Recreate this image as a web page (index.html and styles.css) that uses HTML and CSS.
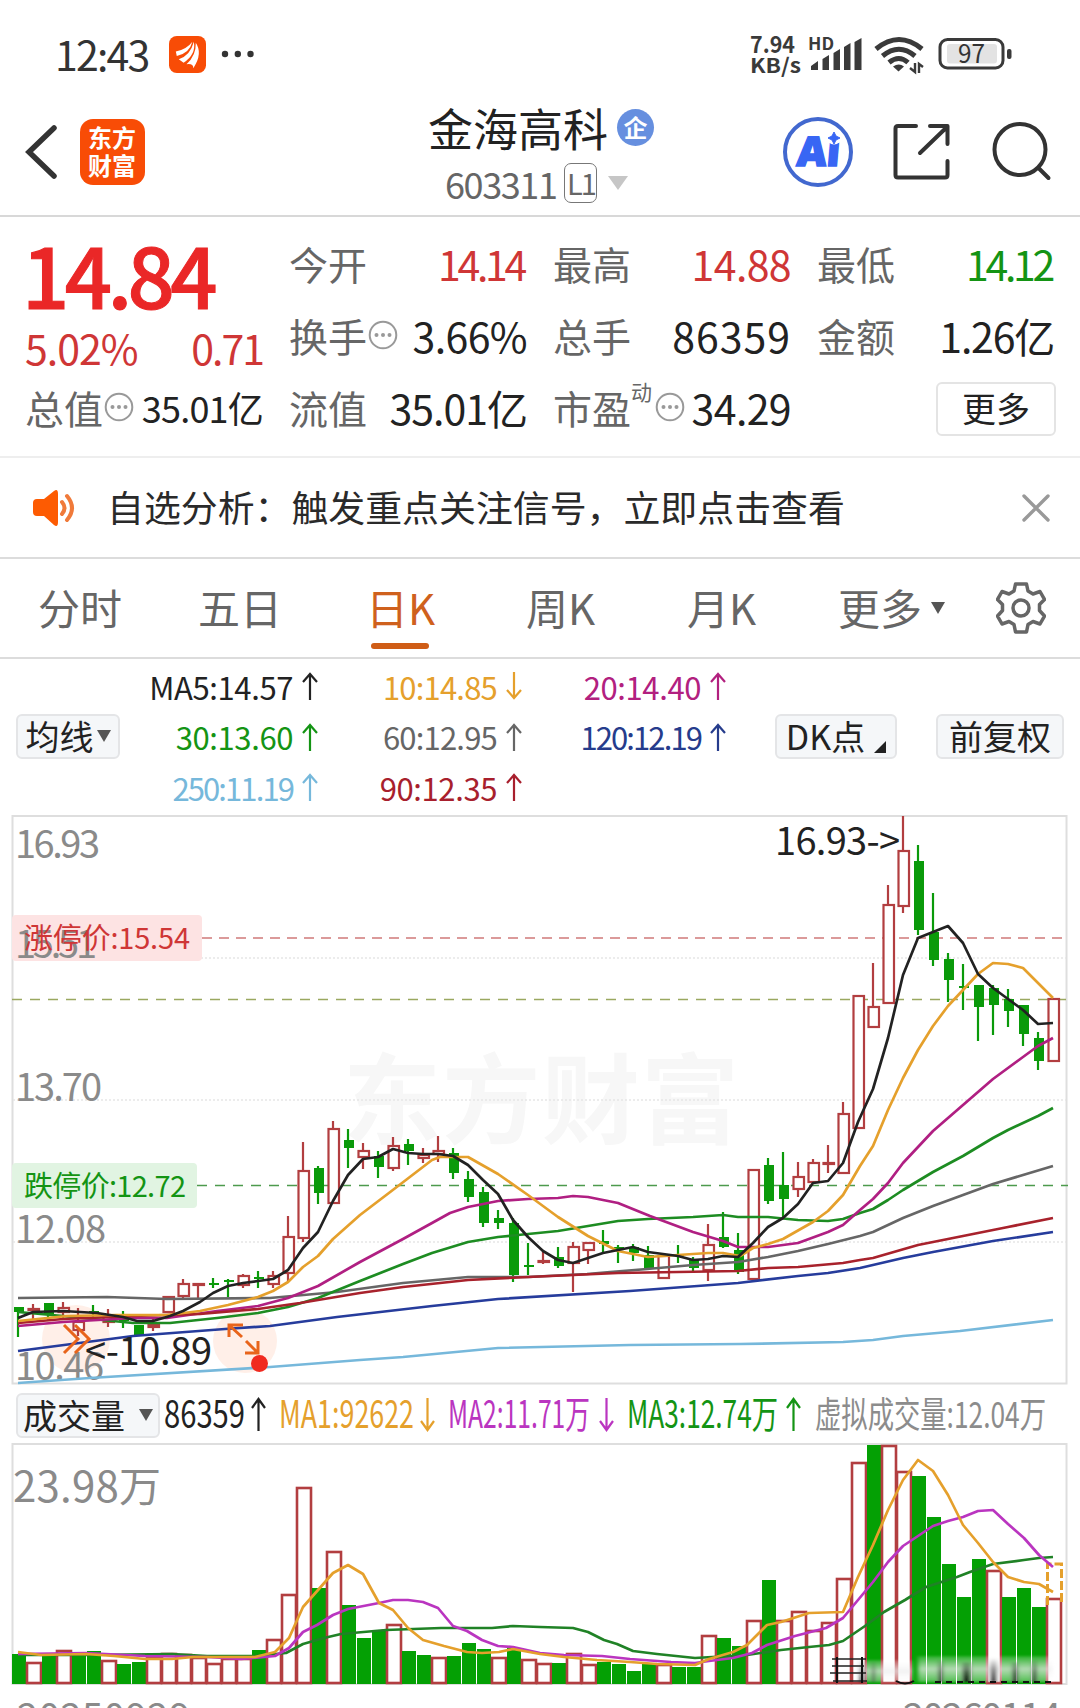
FILE: index.html
```html
<!DOCTYPE html>
<html lang="zh-CN">
<head>
    <meta charset="UTF-8">
    <meta name="viewport" content="width=device-width, initial-scale=1.0">
    <title>金海高科 603311</title>
    <link rel="stylesheet" href="styles.css">
</head>
<body>
    <svg class="defs" width="0" height="0">
        <symbol id="up" viewBox="0 0 16 28"><path d="M8 28V2M1 10L8 2L15 10" fill="none" stroke="currentColor" stroke-width="2.2"/></symbol>
        <symbol id="down" viewBox="0 0 16 28"><path d="M8 0V26M1 18L8 26L15 18" fill="none" stroke="currentColor" stroke-width="2.2"/></symbol>
        <symbol id="info" viewBox="0 0 30 30">
            <circle cx="15" cy="15" r="13.3" fill="none" stroke="#999" stroke-width="2"/>
            <circle cx="8.5" cy="15" r="2" fill="#999"/><circle cx="15" cy="15" r="2" fill="#999"/><circle cx="21.5" cy="15" r="2" fill="#999"/>
        </symbol>
    </svg>

    <div class="status">
        <span class="clock">12:43</span>
        <svg class="status-app" viewBox="0 0 38 38">
            <rect width="38" height="38" rx="8" fill="#f84c06"/>
            <path d="M7 16Q18 14 24 6Q21 18 8 20.500ZM10 24Q22 20 25.500 6Q28 19 15 27.500ZM18 29Q28 20 27.500 7Q35 18 25 33Q25 28 18 29Z" fill="#fff"/>
        </svg>
        <svg class="dots" viewBox="0 0 34 8"><g fill="#333"><circle cx="4" cy="4" r="3.2"/><circle cx="16.8" cy="4" r="3.2"/><circle cx="29.5" cy="4" r="3.2"/></g></svg>
        <svg class="status-right" viewBox="745 30 275 50">
            <g fill="#3a3a3a" font-weight="700">
                <text x="750" y="54" font-size="23" textLength="45" lengthAdjust="spacingAndGlyphs">7.94</text>
                <text x="750" y="74" font-size="20.500" textLength="51" lengthAdjust="spacingAndGlyphs">KB/s</text>
                <text x="808" y="51" font-size="17.500" textLength="26" lengthAdjust="spacingAndGlyphs">HD</text>
                <path d="M811 71v-4l7-5v9zM822.500 71v-11l6.500-4v15zM833.500 71v-17l6.500-4v21zM844 71v-23l6.500-4v27zM854.500 71v-28l7-4v32z"/>
            </g>
            <g fill="none" stroke="#3a3a3a" stroke-width="5">
                <path d="M876 50Q899 31 922 50"/>
                <path d="M882.500 57Q899 43.500 915 57"/>
                <path d="M889 63.500Q899 55.500 908 63.500"/>
            </g>
            <path d="M893 67.500q6-4 11 0l-5.500 5z" fill="#3a3a3a"/>
            <path d="M915 64v9l-5-4M919 74v-9l4 3" fill="none" stroke="#3a3a3a" stroke-width="2.400"/>
            <rect x="940" y="40.500" width="63" height="28.500" rx="7.500" fill="none" stroke="#3a3a3a" stroke-width="3"/>
            <rect x="947" y="45" width="50" height="19.500" rx="3" fill="#e3e3e3"/>
            <rect x="1007" y="50" width="4.500" height="10" rx="2" fill="#3a3a3a"/>
            <text x="958" y="64" font-size="25" textLength="27" lengthAdjust="spacingAndGlyphs" fill="#333">97</text>
        </svg>
    </div>

    <div class="header">
        <svg class="back" viewBox="0 0 34 56"><path d="M30 4L5 28L30 52" fill="none" stroke="#333" stroke-width="5.500" stroke-linecap="round"/></svg>
        <div class="logo">东方<br>财富</div>
        <div class="title">
            <div class="name">金海高科<span class="badge">企</span></div>
            <div class="code">603311<span class="level">L1</span><span class="caret"></span></div>
        </div>
        <svg class="head-icons" viewBox="780 110 280 82">
            <circle cx="818" cy="151" r="33" fill="#fff" stroke="#4268cf" stroke-width="4"/>
            <text class="ai" transform="translate(796 165) skewX(-5)" textLength="43" lengthAdjust="spacingAndGlyphs">Ai</text>
            <circle cx="834" cy="136" r="7.500" fill="#fff"/>
            <path d="M834 131l2 4l4 2l-4 2l-2 4l-2-4l-4-2l4-2z" fill="#3866f4" stroke="#3866f4" stroke-linejoin="round"/>
            <g fill="none" stroke="#333" stroke-width="4" stroke-linecap="round" stroke-linejoin="round">
                <path d="M916 125H898q-2.500 0-2.500 2.500V174q0 2.500 2.500 2.500H945q2.500 0 2.500-2.500V160M930 125H947.500V143M947 126L920 152"/>
                <circle cx="1020" cy="148.500" r="25.500"/>
                <path d="M1038.500 167L1048.500 177"/>
            </g>
        </svg>
    </div>

    <div class="quote">
        <div class="price">
            <div class="last">14.84</div>
            <div class="change"><span>5.02%</span><span class="ones">0.71</span></div>
        </div>
        <div class="cell"><label>今开</label><b class="red ones2">14.14</b></div>
        <div class="cell"><label>最高</label><b class="red">14.88</b></div>
        <div class="cell"><label>最低</label><b class="green ones2">14.12</b></div>
        <div class="cell"><label>换手</label><svg class="info"><use href="#info"/></svg><b>3.66%</b></div>
        <div class="cell"><label>总手</label><b class="wide">86359</b></div>
        <div class="cell"><label>金额</label><b class="yi2">1.26亿</b></div>
        <div class="cell"><label>总值</label><svg class="info"><use href="#info"/></svg><b class="small">35.01亿</b></div>
        <div class="cell"><label>流值</label><b class="yi">35.01亿</b></div>
        <div class="cell"><label>市盈<sup>动</sup></label><svg class="info"><use href="#info"/></svg><b>34.29</b></div>
        <div class="cell"><span class="more">更多</span></div>
    </div>

    <div class="notice">
        <svg class="horn" viewBox="0 0 44 38">
            <path d="M1 14q0-4 4-4h7L22 2q4-3 4 3v28q0 6-4 3L12 27H5q-4 0-4-4z" fill="#fd5b02"/>
            <path d="M30 13q5 6 0 12M35 7q10 12 0 24" fill="none" stroke="#f07a3a" stroke-width="4" stroke-linecap="round"/>
        </svg>
        <span class="notice-text">自选分析：触发重点关注信号，立即点击查看</span>
        <svg class="close" viewBox="0 0 28 28"><path d="M2 2L26 26M26 2L2 26" stroke="#999" stroke-width="3.400" stroke-linecap="round"/></svg>
    </div>

    <div class="tabs">
        <span>分时</span>
        <span>五日</span>
        <span class="active">日K</span>
        <span>周K</span>
        <span>月K</span>
        <span>更多<i class="tri"></i></span>
        <svg class="gear" viewBox="0 0 50 52">
            <path d="M19.500 2h11l1.500 7l5 3l7-2.500l4.500 8l-5 5v6l5 5.500l-4.500 8l-7-2.500l-5 3l-1.500 7.500h-11l-1.500-7.500l-5-3l-7 2.500l-4.500-8l5-5.500v-6l-5-5l4.500-8l7 2.500l5-3z" fill="none" stroke="#666" stroke-width="3.500" stroke-linejoin="round"/>
            <circle cx="25" cy="26" r="8" fill="none" stroke="#666" stroke-width="3.500"/>
        </svg>
    </div>

    <div class="ma">
        <span class="btn ma-btn">均线<i class="tri"></i></span>
        <div class="ma-values">
            <span class="c-black loose">MA5:14.57<svg><use href="#up"/></svg></span>
            <span class="c-orange">10:14.85<svg><use href="#down"/></svg></span>
            <span class="c-pink loose">20:14.40<svg><use href="#up"/></svg></span>
            <span class="c-green loose">30:13.60<svg><use href="#up"/></svg></span>
            <span class="c-gray">60:12.95<svg><use href="#up"/></svg></span>
            <span class="c-blue tight">120:12.19<svg><use href="#up"/></svg></span>
            <span class="c-sky tight">250:11.19<svg><use href="#up"/></svg></span>
            <span class="c-red loose">90:12.35<svg><use href="#up"/></svg></span>
        </div>
        <span class="btn dk-btn">DK点<i class="corner"></i></span>
        <span class="btn">前复权</span>
    </div>

    <svg class="kchart" viewBox="0 810 1080 575">
        <text x="343" y="1136" font-size="98" font-weight="700" fill="#f7f7f7" textLength="396">东方财富</text>
        <rect x="12.500" y="816" width="1054" height="567.500" fill="none" stroke="#dedede" stroke-width="2"/>
        <g stroke="#e6e6e6" stroke-width="1.500" stroke-dasharray="2 2">
            <path d="M13 958H1066M13 1100H1066M13 1242H1066"/>
        </g>
        <rect x="12" y="915" width="190" height="46" rx="4" fill="#fde3e3"/>
        <rect x="12" y="1163" width="185" height="45" rx="4" fill="#e1f4e2"/>
        <g fill="none" stroke-width="1.500">
            <path d="M202 938H1068" stroke="#cf7a7a" stroke-dasharray="10 7"/>
            <path d="M12 999.500H1068" stroke="#9aa860" stroke-dasharray="10 8"/>
            <path d="M197 1185.500H1068" stroke="#4d9a4d" stroke-dasharray="10 8"/>
        </g>
        <circle cx="76" cy="1339" r="34" fill="#ffdccb" opacity=".45"/>
        <circle cx="245" cy="1341" r="32" fill="#ffdccb" opacity=".45"/>
        <g class="axis">
            <text x="15" y="858" textLength="85">16.93</text>
            <text x="15" y="958" textLength="82">15.51</text>
            <text x="15" y="1101" textLength="87">13.70</text>
            <text x="15" y="1243" textLength="91">12.08</text>
            <text x="15" y="1380" textLength="89">10.46</text>
        </g>
        <text x="24" y="949" font-size="29" textLength="166" fill="#cf3636">涨停价:15.54</text>
        <text x="24" y="1197" font-size="29" textLength="162" fill="#149414">跌停价:12.72</text>
        <g id="candles"></g>
        <g id="lines"></g>
        <g fill="none" stroke="#e8641b" stroke-width="3">
            <path d="M64 1325L78 1339L64 1353M75 1325L89 1339L75 1353"/>
            <path d="M229 1337V1325H243M230 1326L242 1337M245 1353H258V1341M246 1341L258 1353"/>
        </g>
        <circle cx="259.500" cy="1363.500" r="8.500" fill="#f02a20"/>
        <g fill="#222" font-size="38">
            <text x="775" y="855" textLength="125">16.93-&gt;</text>
            <text x="85" y="1365" textLength="127">&lt;-10.89</text>
        </g>
    </svg>

    <div class="volume-row">
        <span class="btn vol-btn">成交量<i class="tri"></i></span>
        <svg class="vol-values" viewBox="160 1390 900 50">
            <g font-size="38">
                <text x="164" y="1428" textLength="81" lengthAdjust="spacingAndGlyphs" fill="#222">86359</text>
                <text x="279" y="1428" textLength="135" lengthAdjust="spacingAndGlyphs" fill="#e5a02c">MA1:92622</text>
                <text x="448" y="1428" textLength="142" lengthAdjust="spacingAndGlyphs" fill="#ba35c0">MA2:11.71万</text>
                <text x="627" y="1428" textLength="151" lengthAdjust="spacingAndGlyphs" fill="#149414">MA3:12.74万</text>
                <text x="815" y="1428" font-size="36" textLength="231" lengthAdjust="spacingAndGlyphs" fill="#8c8c8c">虚拟成交量:12.04万</text>
            </g>
            <g fill="none" stroke-width="2.200">
                <path d="M258.500 1431V1400M252 1408L258.500 1399L265 1408" stroke="#222"/>
                <path d="M427.500 1398V1429M421 1421L427.500 1430L434 1421" stroke="#e5a02c"/>
                <path d="M606.500 1398V1429M600 1421L606.500 1430L613 1421" stroke="#ba35c0"/>
                <path d="M793.500 1431V1400M787 1408L793.500 1399L800 1408" stroke="#149414"/>
            </g>
        </svg>
    </div>

    <svg class="vchart" viewBox="0 1440 1080 268">
        <defs>
            <filter id="soft" x="-10%" y="-10%" width="120%" height="120%"><feGaussianBlur stdDeviation="2 1"/></filter>
            <linearGradient id="fade" x1="0" y1="0" x2="0" y2="1">
                <stop offset="0" stop-color="#fff" stop-opacity=".15"/>
                <stop offset=".5" stop-color="#eee" stop-opacity=".75"/>
                <stop offset="1" stop-color="#fff" stop-opacity=".3"/>
            </linearGradient>
            <linearGradient id="ink" x1="0" y1="0" x2="0" y2="1">
                <stop offset="0" stop-color="#000" stop-opacity="0"/>
                <stop offset="1" stop-color="#000" stop-opacity=".9"/>
            </linearGradient>
        </defs>
        <rect x="12.500" y="1444" width="1054" height="240" fill="none" stroke="#dedede" stroke-width="2"/>
        <text x="13" y="1502" font-size="42" textLength="148" fill="#8a8a8a">23.98万</text>
        <g id="bars"></g>
        <path d="M1047.500 1605V1564H1061.500V1605" fill="none" stroke="#e5a02c" stroke-width="3" stroke-dasharray="9 3"/>
        <g id="vlines"></g>
        <g filter="url(#soft)">
            <rect x="862" y="1660" width="50" height="22" fill="url(#fade)"/>
            <rect x="918" y="1656" width="134" height="26" fill="url(#fade)"/>
            <path d="M860 1658h5v24h-5zM872 1662h3v20h-3zM938 1660h5v22h-5zM962 1662h9v20h-9zM990 1658h7v24h-7zM1012 1662h6v20h-6zM1032 1660h5v22h-5z" fill="url(#ink)"/>
        </g>
        <path d="M832 1659h34M832 1666h32M830 1673h36M833 1681h34" stroke="#222" stroke-width="1.500"/>
        <path d="M837 1657v26M862 1657v26M896 1681q9 5 18 0" fill="none" stroke="#111" stroke-width="2"/>
        <path d="M935 1682h120" stroke="#111" stroke-width="2" stroke-dasharray="6 5"/>
        <g class="axis">
            <text x="17" y="1731" textLength="173">20250929</text>
            <text x="903" y="1731" textLength="158">20260114</text>
        </g>
    </svg>

    <script src="chart.js"></script>
</body>
</html>
```
FILE: styles.css
```css
* {
    box-sizing: border-box;
}
body {
    margin: 0;
    width: 1080px;
    height: 1708px;
    overflow: hidden;
    background: #fff;
    color: #222;
    font-family: "Noto Sans CJK SC", "Noto Sans", sans-serif;
    line-height: 1;
    font-kerning: none;
}
svg {
    display: block;
    flex: none;
}
.defs {
    position: absolute;
}
.status {
    height: 88px;
    padding: 20px 60px 0 55px;
    display: flex;
    align-items: center;
}
.clock {
    width: 114px;
    padding-bottom: 2px;
    font-size: 41px;
    letter-spacing: -1.8px;
    color: #333;
}
.status-app {
    width: 37px;
    height: 37px;
}
.dots {
    width: 34px;
    height: 8px;
    margin-left: 15px;
}
.status-right {
    width: 275px;
    height: 50px;
    margin-left: auto;
}
.header {
    height: 129px;
    padding: 0 20px 0 24px;
    display: flex;
    align-items: center;
    border-bottom: 2px solid #d8d8d8;
}
.back {
    width: 34px;
    height: 56px;
}
.logo {
    width: 65px;
    height: 66px;
    margin-left: 22px;
    padding: 4px 0 0 8px;
    border-radius: 13px;
    background: #f84c06;
    color: #fff;
    font-size: 24px;
    line-height: 28px;
    font-weight: 700;
}
.title {
    margin-left: 283px;
    width: 352px;
    padding-top: 2px;
}
.name {
    display: flex;
    align-items: center;
    font-size: 45px;
    height: 60px;
}
.badge {
    width: 37px;
    height: 37px;
    margin-left: 9px;
    border-radius: 50%;
    background: #668fdf;
    color: #fff;
    font-size: 24px;
    font-weight: 700;
    line-height: 35px;
    text-align: center;
}
.code {
    display: flex;
    align-items: center;
    height: 50px;
    padding-left: 17px;
    font-size: 36px;
    letter-spacing: -1.4px;
    color: #666;
}
.level {
    width: 33px;
    height: 40px;
    margin-left: 8px;
    border: 1.5px solid #777;
    border-radius: 7px;
    font-size: 29px;
    letter-spacing: -2px;
    line-height: 36px;
    text-align: center;
}
.caret {
    margin-left: 11px;
    border: 10.5px solid transparent;
    border-top: 14px solid #c6c6c6;
    border-bottom: 0;
}
.head-icons {
    width: 280px;
    height: 82px;
}
.ai {
    font-family: "Open Sans", "Noto Sans", sans-serif;
    font-size: 41px;
    font-weight: 800;
    fill: #3866f4;
    stroke: #3866f4;
    stroke-width: 1.5px;
}
.quote {
    height: 241px;
    padding: 11px 25px 0;
    display: grid;
    grid-template-columns: repeat(4, 238px);
    grid-auto-rows: 72px;
    column-gap: 26px;
    border-bottom: 2px solid #eee;
}
.price {
    grid-row: span 2;
    color: #e02b2b;
}
.last {
    height: 94px;
    font-size: 83px;
    line-height: 90px;
    font-weight: 500;
    letter-spacing: -4.6px;
    margin-left: -3px;
    color: #ea2727;
    -webkit-text-stroke: 1px #ea2727;
}
.change {
    display: flex;
    justify-content: space-between;
    font-size: 41px;
    line-height: 50px;
    letter-spacing: -1px;
    color: #cf3636;
}
.cell {
    display: flex;
    align-items: center;
    padding-bottom: 2px;
    font-size: 41px;
}
.cell label {
    font-size: 39px;
    color: #666;
    white-space: nowrap;
}
.cell b {
    margin-left: auto;
    font-weight: 400;
    letter-spacing: -.6px;
    white-space: nowrap;
}
.cell sup {
    display: inline-block;
    vertical-align: 24px;
    font-size: 21px;
    line-height: 0;
    width: 23px;
}
.info {
    width: 30px;
    height: 30px;
    margin-left: 1px;
}
.change .ones {
    letter-spacing: -2px;
}
.cell .ones2 {
    padding-right: 3px;
    letter-spacing: -3.3px;
}
.cell .wide {
    letter-spacing: 1px;
}
.cell .small {
    font-size: 36px;
    letter-spacing: -.8px;
}
.cell .yi {
    letter-spacing: -1px;
}
.cell .yi2 {
    padding-right: 1px;
    letter-spacing: -1.2px;
}
.red {
    color: #cf3636;
}
.green {
    color: #149414;
}
.more {
    width: 120px;
    height: 54px;
    margin: 4px -1px 0 auto;
    border: 2px solid #e4e4e4;
    border-radius: 6px;
    font-size: 34px;
    line-height: 47px;
    text-align: center;
}
.notice {
    height: 101px;
    padding: 0 30px 0 32px;
    display: flex;
    align-items: center;
    border-bottom: 2px solid #dcdcdc;
}
.horn {
    width: 44px;
    height: 38px;
}
.notice-text {
    margin-left: 31px;
    padding-bottom: 2px;
    font-size: 36.9px;
    color: #2a2a2a;
}
.close {
    width: 28px;
    height: 28px;
    margin-left: auto;
}
.tabs {
    height: 100px;
    padding-left: 38px;
    display: grid;
    grid-template-columns: 160px 170px 158px 161px 151px 158px 50px;
    align-items: center;
    font-size: 42px;
    color: #666;
    border-bottom: 2px solid #dcdcdc;
}
.tabs span {
    padding-bottom: 2px;
}
.tabs .active {
    position: relative;
    left: -2px;
    color: #cf611d;
}
.tabs .active::after {
    content: "";
    position: absolute;
    left: 5px;
    top: 57px;
    width: 58px;
    height: 6px;
    border-radius: 3px;
    background: #cf5d16;
}
.gear {
    width: 50px;
    height: 52px;
}
.tri {
    display: inline-block;
    border: 7px solid transparent;
    border-top: 12px solid #555;
    border-bottom: 0;
}
.tabs .tri {
    margin: 0 0 11px 9px;
}
.ma {
    height: 151px;
    padding: 4px 16px 0;
    display: flex;
    align-items: center;
}
.btn {
    height: 45px;
    display: flex;
    align-items: center;
    justify-content: center;
    border: 2px solid #e4e5e7;
    border-radius: 6px;
    background: #f5f7f9;
    font-size: 34px;
    padding-bottom: 2px;
    flex: none;
}
.ma-btn {
    width: 104px;
}
.ma-btn .tri {
    margin-left: 3px;
}
.ma-values {
    width: 608px;
    margin-right: 47px;
    padding-right: 2px;
    display: grid;
    grid-template-columns: 198px 204px 204px;
    grid-auto-rows: 50.5px;
    font-size: 31px;
    letter-spacing: -.8px;
}
.ma-values span {
    display: flex;
    align-items: center;
    justify-content: flex-end;
}
.ma-values .loose {
    letter-spacing: -.4px;
}
.ma-values .tight {
    letter-spacing: -1.9px;
}
.ma-values svg {
    width: 16px;
    height: 28px;
    margin-left: 9px;
}
.dk-btn {
    width: 122px;
    margin-right: 39px;
}
.dk-btn + .btn {
    width: 128px;
}
.corner {
    margin: 22px 0 0 9px;
    border-left: 12px solid transparent;
    border-bottom: 12px solid #222;
}
.c-black { color: #222; }
.c-orange { color: #e5a02c; }
.c-pink { color: #b2207f; }
.c-green { color: #149414; }
.c-gray { color: #666; }
.c-blue { color: #263c8c; }
.c-sky { color: #76b8db; }
.c-red { color: #a81f2d; }
.kchart {
    width: 1080px;
    height: 575px;
}
.axis {
    font-size: 38px;
    fill: #8a8a8a;
}
.volume-row {
    height: 55px;
    padding: 5px 0 0 16px;
    display: flex;
}
.vol-btn {
    width: 144px;
    margin-top: 3px;
}
.vol-btn .tri {
    margin-left: 14px;
}
.vol-values {
    width: 900px;
    height: 50px;
}
.vchart {
    width: 1080px;
    height: 268px;
}
```
FILE: chart.js
```js
const RED = '#b23e40';
const GREEN = '#0a9a0a';

// direction, high, body top, body bottom, low
const candles = [
    ['g', 1307, 1307, 1312, 1337], ['r', 1304, 1309, 1310, 1319], ['g', 1303, 1303, 1314, 1321], ['r', 1302, 1308, 1312, 1319],
    ['r', 1308, 1322, 1330, 1336], ['g', 1305, 1311, 1313, 1321], ['r', 1309, 1316, 1322, 1327], ['g', 1311, 1319, 1321, 1328],
    ['g', 1325, 1325, 1336, 1336], ['r', 1317, 1325, 1327, 1331], ['r', 1297, 1297, 1312, 1312], ['r', 1279, 1284, 1296, 1298],
    ['r', 1283, 1284, 1285, 1298], ['g', 1278, 1283, 1285, 1288], ['g', 1279, 1280, 1282, 1297], ['r', 1274, 1276, 1285, 1288],
    ['g', 1271, 1277, 1279, 1288], ['r', 1271, 1276, 1284, 1288], ['r', 1216, 1237, 1273, 1281], ['r', 1142, 1171, 1238, 1242],
    ['g', 1166, 1168, 1193, 1204], ['r', 1121, 1129, 1203, 1203], ['g', 1129, 1140, 1148, 1168], ['r', 1143, 1151, 1157, 1169],
    ['g', 1151, 1156, 1167, 1178], ['r', 1137, 1146, 1168, 1171], ['g', 1139, 1144, 1151, 1165], ['r', 1148, 1155, 1158, 1163],
    ['r', 1136, 1151, 1154, 1162], ['g', 1148, 1153, 1173, 1179], ['g', 1171, 1179, 1197, 1202], ['g', 1187, 1192, 1223, 1227],
    ['g', 1210, 1218, 1223, 1229], ['g', 1218, 1223, 1275, 1282], ['g', 1243, 1265, 1267, 1275], ['r', 1251, 1261, 1262, 1264],
    ['g', 1247, 1257, 1266, 1268], ['r', 1242, 1247, 1263, 1292], ['r', 1243, 1243, 1250, 1264], ['g', 1230, 1241, 1244, 1252],
    ['g', 1245, 1247, 1249, 1263], ['g', 1244, 1247, 1253, 1261], ['g', 1246, 1255, 1268, 1269], ['r', 1256, 1256, 1278, 1278],
    ['g', 1245, 1254, 1256, 1263], ['g', 1257, 1260, 1268, 1271], ['r', 1224, 1245, 1270, 1281], ['g', 1212, 1237, 1247, 1248],
    ['g', 1233, 1250, 1272, 1274], ['r', 1170, 1170, 1279, 1279], ['g', 1158, 1165, 1201, 1204], ['g', 1152, 1185, 1199, 1217],
    ['r', 1162, 1177, 1189, 1197], ['r', 1159, 1163, 1182, 1182], ['r', 1145, 1163, 1164, 1173], ['r', 1102, 1114, 1173, 1173],
    ['r', 996, 996, 1128, 1128], ['r', 963, 1007, 1027, 1027], ['r', 885, 905, 1003, 1003], ['r', 816, 851, 906, 913],
    ['g', 845, 861, 930, 935], ['g', 893, 932, 960, 966], ['g', 953, 959, 980, 1002], ['g', 964, 986, 988, 1010],
    ['g', 985, 985, 1007, 1041], ['g', 985, 988, 1005, 1035], ['g', 989, 999, 1011, 1027], ['g', 1005, 1005, 1034, 1046],
    ['g', 1032, 1038, 1061, 1070], ['r', 999, 999, 1061, 1061]
];

// top edge of each volume bar, the baseline is 1684
const volumes = [
    1654, 1662, 1655, 1650, 1655, 1651, 1660, 1664, 1662, 1657, 1653, 1654, 1657, 1663, 1658, 1658, 1650, 1639, 1594, 1487,
    1588, 1551, 1605, 1638, 1631, 1624, 1651, 1655, 1657, 1656, 1643, 1649, 1657, 1648, 1659, 1663, 1663, 1653, 1664, 1662,
    1664, 1671, 1664, 1664, 1667, 1667, 1635, 1638, 1646, 1620, 1580, 1620, 1611, 1630, 1622, 1578, 1462, 1445, 1445, 1471,
    1476, 1517, 1564, 1597, 1559, 1570, 1597, 1588, 1607, 1598
];
const volumeColors = 'grgrggrggrrrrrrrgrrrgrgggrggrgggrgrrgrrggggrggrggrgrrrrrrgrrgggggrgggr';

// moving averages as x,y pairs
const averages = {
    '#76b8db': '18,1383 90,1378 270,1367 360,1360 403,1357 498,1348 630,1345 740,1344 843,1342 873,1340 903,1336 960,1331 1053,1320',
    '#263c9c': '18,1351 133,1336 225,1329 270,1326 337,1317 432,1306 498,1299 630,1291 738,1283 798,1276 828,1273 860,1268 903,1258 933,1252 993,1241 1053,1232',
    '#666': '18,1298 107,1297 167,1299 270,1298 337,1292 403,1283 468,1277 528,1277 587,1274 647,1269 693,1265 738,1262 768,1257 798,1251 828,1244 860,1236 873,1232 903,1218 933,1206 963,1195 993,1184 1023,1175 1053,1166',
    '#1d8c22': '18,1312 63,1316 133,1323 170,1323 217,1318 258,1313 288,1307 318,1298 360,1281 403,1264 432,1253 468,1242 498,1237 528,1234 558,1231 588,1226 618,1221 648,1219 693,1217 723,1215 738,1217 768,1217 798,1220 828,1221 843,1219 860,1213 873,1209 888,1200 903,1190 933,1172 963,1156 993,1138 1008,1130 1038,1116 1053,1108',
    '#b01f82': '18,1326 63,1322 133,1318 167,1318 217,1311 258,1306 288,1298 318,1286 360,1262 403,1239 432,1223 450,1213 468,1207 498,1201 528,1199 558,1198 573,1196 588,1197 618,1203 650,1216 693,1232 723,1241 738,1247 768,1247 798,1243 828,1232 843,1225 860,1210 873,1199 888,1183 903,1163 933,1131 963,1105 993,1079 1023,1057 1038,1046 1053,1038',
    '#a8222c': '18,1323 63,1319 133,1316 200,1314 258,1309 300,1303 360,1293 403,1287 468,1280 528,1277 618,1273 738,1271 768,1268 798,1267 843,1263 860,1260 873,1258 918,1245 963,1236 1008,1227 1053,1218',
    '#e5a02c': '18,1321 67,1316 117,1315 167,1315 200,1311 228,1305 258,1297 273,1291 288,1282 303,1267 318,1256 333,1239 360,1215 402,1183 432,1160 440,1157 468,1157 498,1174 528,1195 558,1217 588,1236 618,1251 648,1257 678,1255 708,1253 723,1253 740,1256 753,1248 768,1244 783,1239 813,1222 828,1211 843,1195 860,1166 873,1146 888,1110 903,1078 918,1050 933,1026 948,1006 963,990 978,974 993,963 1008,964 1023,968 1038,983 1053,998',
    '#222': '18,1318 33,1312 63,1311 97,1313 123,1317 137,1321 153,1321 170,1316 183,1311 200,1302 213,1293 228,1286 243,1283 258,1281 273,1279 288,1270 303,1248 318,1232 333,1201 348,1175 363,1159 378,1157 393,1149 408,1153 423,1154 438,1154 453,1156 468,1165 483,1180 498,1194 513,1220 528,1237 543,1251 558,1260 573,1263 588,1258 603,1253 618,1250 633,1247 648,1252 663,1254 678,1256 693,1260 708,1259 723,1256 738,1257 753,1243 768,1227 783,1218 798,1204 813,1183 828,1181 843,1163 858,1122 873,1089 888,1038 903,975 918,938 933,932 948,926 963,943 978,974 993,988 1008,999 1023,1010 1038,1024 1053,1023'
};
const volumeAverages = {
    '#208226': '18,1655 86,1655 172,1654 207,1656 255,1656 286,1653 303,1644 324,1638 341,1634 386,1630 441,1628 492,1628 513,1626 540,1627 573,1628 588,1632 604,1640 617,1644 633,1651 657,1654 695,1658 747,1655 781,1650 809,1647 829,1645 843,1641 865,1626 884,1612 905,1600 926,1587 957,1577 970,1572 993,1564 1024,1560 1039,1558 1053,1557',
    '#ba35c0': '18,1654 86,1653 145,1656 207,1657 241,1659 275,1656 289,1648 303,1632 317,1625 333,1615 348,1609 379,1603 393,1600 408,1600 423,1602 438,1608 453,1626 467,1631 482,1640 498,1646 513,1647 540,1653 564,1655 602,1656 630,1659 671,1662 695,1663 709,1661 733,1658 752,1653 767,1645 795,1636 826,1628 843,1618 858,1600 873,1582 888,1562 903,1546 933,1526 948,1521 963,1517 978,1511 993,1510 1008,1524 1024,1538 1039,1555 1053,1567',
    '#e5a02c': '18,1652 41,1655 86,1654 114,1656 145,1659 172,1659 193,1657 255,1657 275,1652 289,1638 303,1607 318,1590 333,1573 348,1565 363,1574 379,1603 393,1610 408,1628 423,1640 444,1646 467,1652 482,1653 499,1652 513,1649 540,1654 564,1657 597,1660 630,1662 657,1664 695,1665 709,1659 733,1652 747,1645 753,1639 767,1625 781,1622 809,1613 843,1612 858,1577 873,1545 888,1510 903,1480 918,1460 933,1471 948,1495 963,1525 978,1543 993,1562 1008,1577 1024,1582 1039,1584 1053,1592'
};

function drawLines(id, lines) {
    let out = '';
    for (const color in lines) {
        out += `<polyline points="${lines[color]}" fill="none" stroke="${color}" stroke-width="2.7" stroke-linejoin="round"/>`;
    }
    document.getElementById(id).innerHTML = out;
}

function drawCandles() {
    let out = '';
    candles.forEach(([dir, high, top, bottom, low], i) => {
        const x = 18 + i * 15;
        if (dir === 'g') {
            out += `<path d="M${x} ${high}V${low}" stroke="${GREEN}" stroke-width="2.2"/>`;
            out += `<rect x="${x - 4}" y="${top}" width="10" height="${bottom - top}" fill="${GREEN}"/>`;
        } else {
            out += `<path d="M${x} ${high}V${top}M${x} ${bottom}V${low}" stroke="${RED}" stroke-width="2.2"/>`;
            out += `<rect x="${x - 4.5}" y="${top}" width="10.5" height="${bottom - top}" fill="#fff" stroke="${RED}" stroke-width="2.2"/>`;
        }
    });
    document.getElementById('candles').innerHTML = out;
}

function drawVolumes() {
    let out = '';
    volumes.forEach((top, i) => {
        const x = 12 + i * 15;
        if (volumeColors[i] === 'g') {
            out += `<rect x="${x}" y="${top}" width="14" height="${1684 - top}" fill="#04a004"/>`;
        } else {
            out += `<rect x="${x}" y="${top + 1}" width="14" height="${1682 - top}" fill="#fff" stroke="${RED}" stroke-width="2.6"/>`;
        }
    });
    document.getElementById('bars').innerHTML = out;
}

drawCandles();
drawVolumes();
drawLines('lines', averages);
drawLines('vlines', volumeAverages);
```
